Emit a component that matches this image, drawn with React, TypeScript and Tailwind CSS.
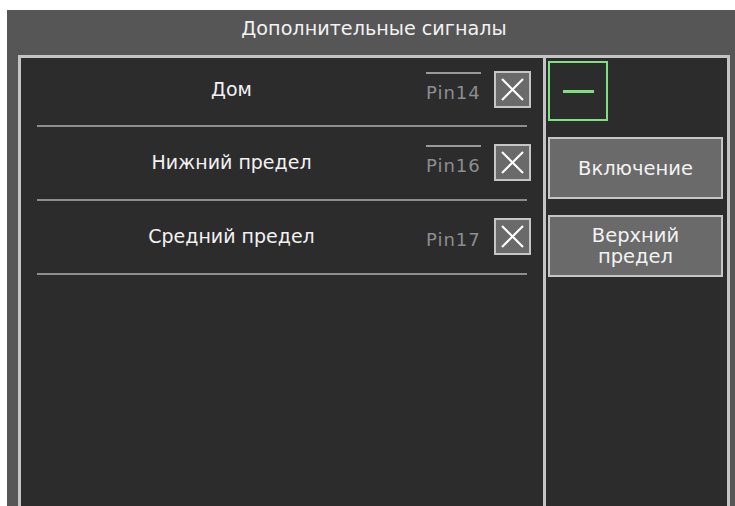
type Signal = { label: string; pin: string; linked: boolean };

const signals: Signal[] = [
  { label: 'Дом', pin: 'Pin14', linked: true },
  { label: 'Нижний предел', pin: 'Pin16', linked: true },
  { label: 'Средний предел', pin: 'Pin17', linked: false },
];

const font = { fontFamily: '"DejaVu Sans", Verdana, sans-serif' };

function CrossBox() {
  return (
    <button className="ml-[13px] flex h-[37px] w-[37px] items-center justify-center border-2 border-[#c6c6c6] bg-[#6a6a6a]">
      <svg width="23" height="23" viewBox="0 0 23 23" fill="none" stroke="#ffffff" strokeWidth="2.2">
        <line x1="1" y1="1" x2="22" y2="22" />
        <line x1="22" y1="1" x2="1" y2="22" />
      </svg>
    </button>
  );
}

function SignalRow({ signal, first }: { signal: Signal; first: boolean }) {
  return (
    <div className={`flex flex-col ${first ? 'h-[69px]' : 'h-[74px]'}`}>
      <div className={`flex flex-1 items-center ${first ? 'pb-[4px]' : 'pb-[1px]'}`}>
        <div className="flex-1 text-center text-[19px] text-[#f2f2f2]">{signal.label}</div>
        <div className="relative top-[3px] w-[55px] text-[18px] tracking-[1px] text-[#8c8e92]">
          {signal.linked && <div className="absolute -top-[7px] left-0 h-[2px] w-full bg-[#9a9a9a]" />}
          {signal.pin}
        </div>
        <CrossBox />
      </div>
      <div className="mr-[4px] h-[2px] bg-[#8e8e8e]" />
    </div>
  );
}

function SideButton({ children }: { children: React.ReactNode }) {
  return (
    <button className="flex h-[62px] w-[175px] items-center justify-center border-2 border-[#c6c6c6] bg-[#6a6a6a] text-[19.5px] leading-[21px] text-[#f2f2f2]">
      {children}
    </button>
  );
}

export default function App() {
  return (
    <div className="h-[506px] w-[735px] overflow-hidden bg-white pl-[7px] pt-[10px]" style={font}>
      <div className="flex h-full flex-col bg-[#565656]">
        <div className="flex h-[45px] items-center justify-center pb-[6px] pl-[6px] text-[19.2px] text-[#f2f2f2]">
          Дополнительные сигналы
        </div>
        <div className="ml-[11px] mr-[5px] flex flex-1 border-[3px] border-b-0 border-[#c4c4c4] bg-[#2c2c2c]">
          <div className="flex-1 pl-[16px] pr-[12px]">
            {signals.map((s, i) => (
              <SignalRow key={s.pin} signal={s} first={i === 0} />
            ))}
          </div>
          <div className="flex w-[184px] flex-col items-start gap-[16px] border-l-[3px] border-[#c4c4c4] pl-[2px] pt-[3px]">
            <div className="flex h-[60px] w-[60px] items-center justify-center border-2 border-[#7ee07e]">
              <div className="h-[3px] w-[31px] bg-[#7ee07e]" />
            </div>
            <SideButton>Включение</SideButton>
            <SideButton>
              <span>
                Верхний
                <br />
                предел
              </span>
            </SideButton>
          </div>
        </div>
      </div>
    </div>
  );
}
